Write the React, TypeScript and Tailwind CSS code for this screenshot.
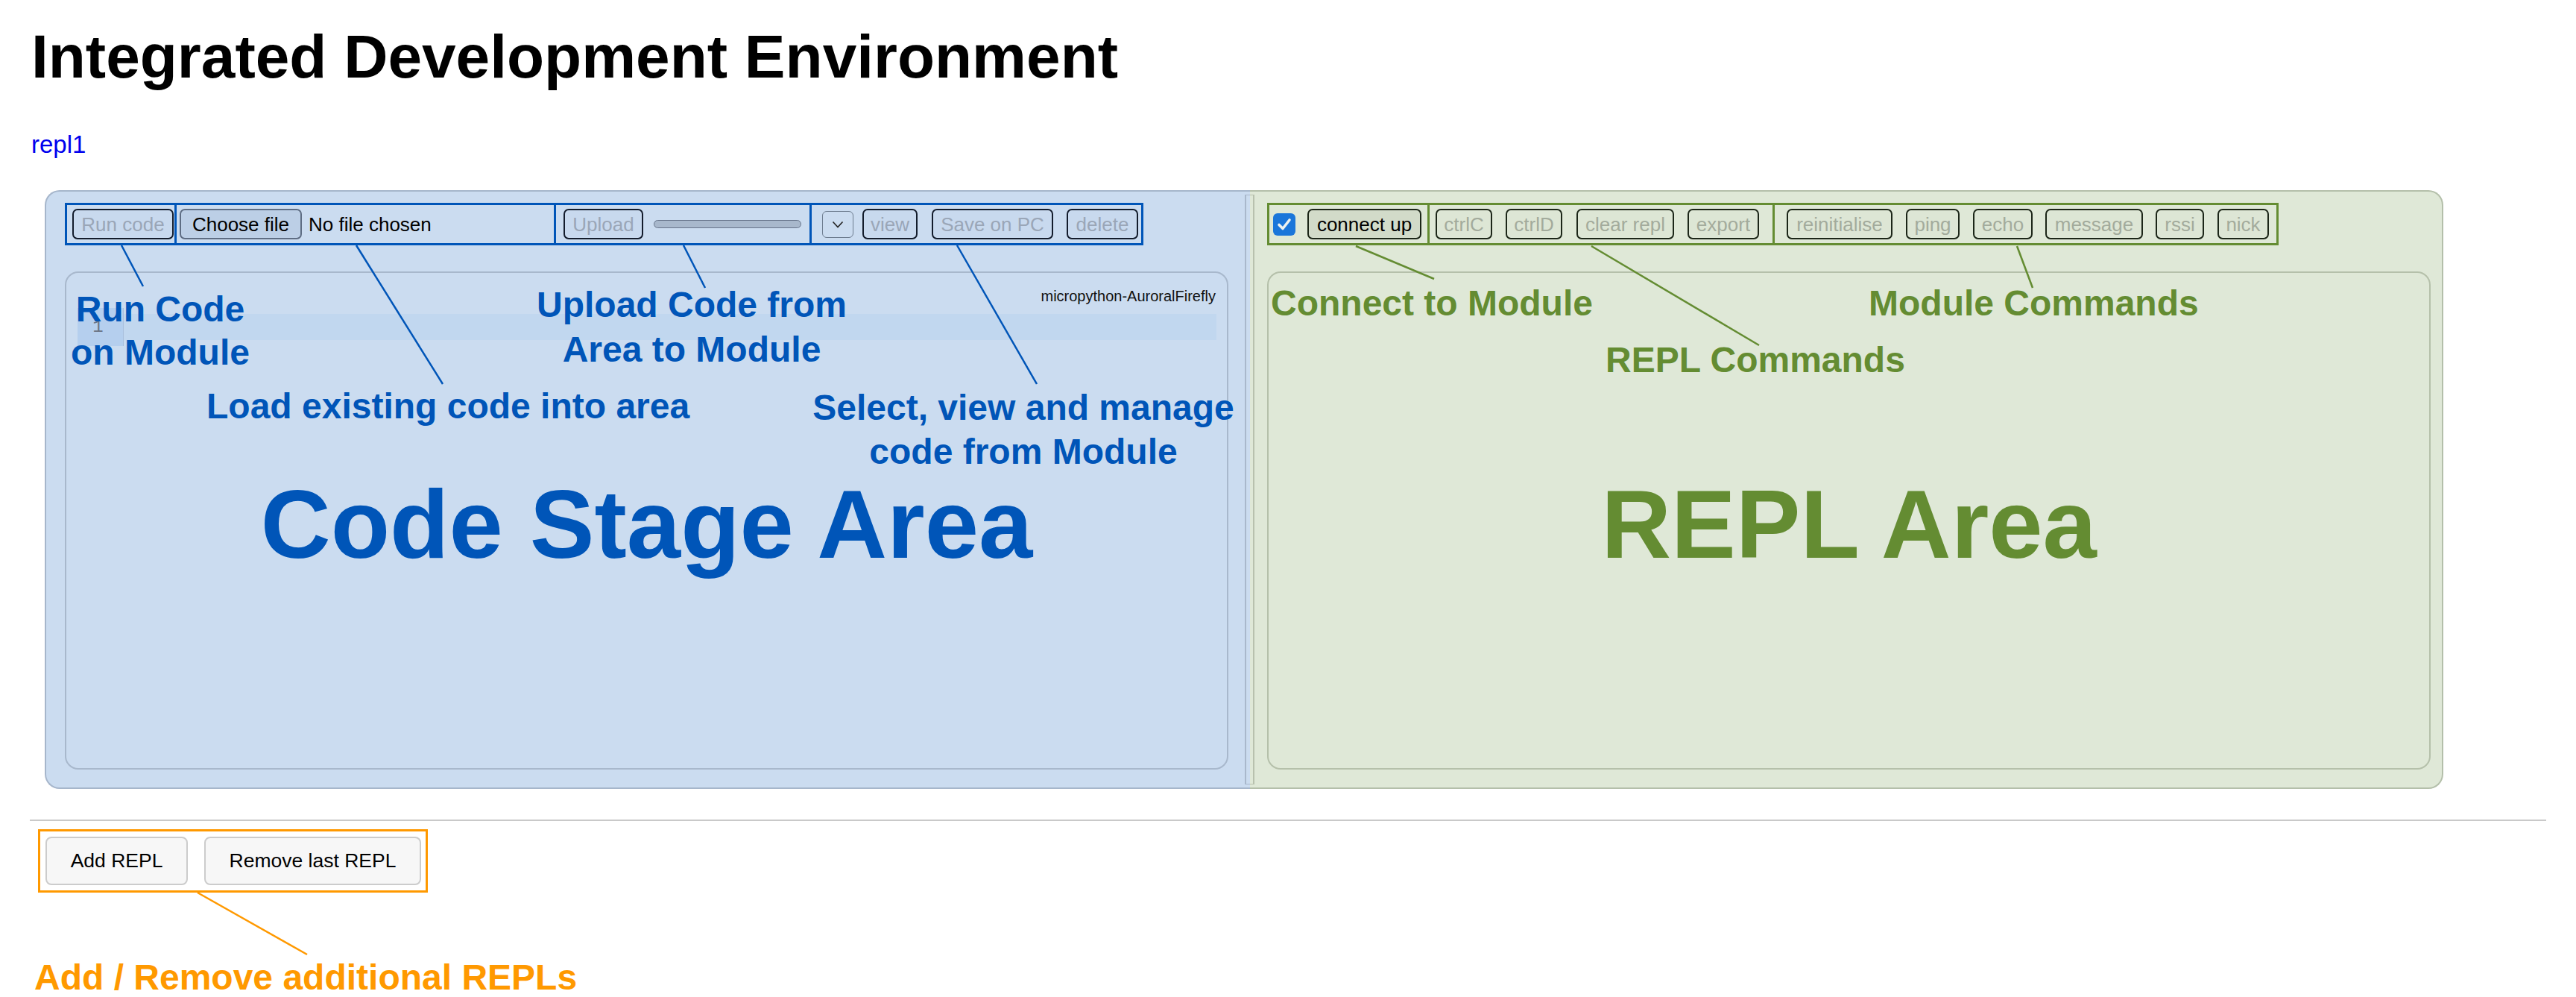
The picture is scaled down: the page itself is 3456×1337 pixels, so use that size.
import React from "react";

const btnBase =
  "h-[41px] shrink-0 flex items-center justify-center rounded-[7px] border-2 text-[26px] leading-none";
const leftDis = `${btnBase} border-[#131c2c] bg-[#c8d9ee] text-[#9aa6b7]`;
const rightDis = `${btnBase} border-[#1c2618] bg-[#dde6d5] text-[#a3ab9c]`;

const annBlue = "absolute whitespace-nowrap font-bold text-[48px] text-[#0055b8]";
const annGreen = "absolute whitespace-nowrap font-bold text-[48px] text-[#648c32]";

export default function App() {
  return (
    <div className="relative min-h-[1337px] w-full overflow-hidden bg-white px-[40px] font-['Liberation_Sans',Arial,sans-serif] text-black">
      <h1 className="pl-[2px] pt-[35px] text-[82px] font-bold leading-[82px]">
        Integrated Development Environment
      </h1>
      <div className="mt-[57px] h-[40px] pl-[2px] text-[33px] leading-[40px] text-[#0000ee]">repl1</div>

      {/* IDE panel */}
      <div className="ml-[20px] mt-[41px] flex h-[803px] w-[3218px]">
        {/* left pane */}
        <div className="flex w-[1617px] rounded-l-[20px] border-y-2 border-l-2 border-[#a6b6cb] bg-[#cbdcf0]">
          <div className="flex flex-1 flex-col pb-[24px] pl-[25px] pr-[22px] pt-[15px]">
            {/* toolbar */}
            <div className="flex h-[57px] w-[1447px] items-center border-[3px] border-[#0055b8]">
              <div className="flex h-full w-[144px] items-center pl-[7px]">
                <div className={`${leftDis} w-[136px]`}>Run code</div>
              </div>
              <div className="flex h-full w-[509px] items-center border-l-[3px] border-[#0055b8] pl-[4px]">
                <div className="flex h-[41px] w-[164px] items-center justify-center rounded-[7px] border-2 border-[#5e6d83] bg-[#bccfe6] text-[26px] leading-none text-black">
                  Choose file
                </div>
                <span className="ml-[9px] text-[26px] leading-none text-black">No file chosen</span>
              </div>
              <div className="flex h-full w-[343px] items-center border-l-[3px] border-[#0055b8] pl-[10px]">
                <div className={`${leftDis} w-[107px]`}>Upload</div>
                <div className="ml-[14px] h-[11px] w-[198px] rounded-full border-[1.5px] border-[#66748a] bg-[#a8b8cc]" />
              </div>
              <div className="flex h-full flex-1 items-center border-l-[3px] border-[#0055b8] pl-[14px]">
                <div className="flex h-[36px] w-[42px] items-center justify-center rounded-[6px] border-[1.5px] border-[#6d7c8f] bg-[#cbdcf0]">
                  <svg width="16" height="10" viewBox="0 0 16 10">
                    <path d="M1.5 1.5 L8 8.5 L14.5 1.5" fill="none" stroke="#222" strokeWidth="1.6" />
                  </svg>
                </div>
                <div className={`${leftDis} ml-[12px] w-[74px]`}>view</div>
                <div className={`${leftDis} ml-[19px] w-[163px]`}>Save on PC</div>
                <div className={`${leftDis} ml-[18px] w-[96px]`}>delete</div>
              </div>
            </div>

            {/* code stage */}
            <div className="mt-[35px] flex h-[668px] flex-col rounded-[18px] border-2 border-[#a8b8cc]">
              <div className="mt-[19px] flex justify-end pr-[15px] text-[20px] leading-[24px] text-[#111]">
                micropython-AuroralFirefly
              </div>
              <div className="ml-[15px] mr-[14px] mt-[4px] flex h-[51px] items-center">
                <div className="flex h-full w-[62px] items-center justify-center border-r border-[#a9c0dc] bg-[#b5cfee] pr-[6px] font-['Liberation_Mono',monospace] text-[24px] text-[#6b7585]">
                  1
                </div>
                <div className="h-[35px] flex-1 bg-[#c1d7ef]" />
              </div>
              <div className="mt-[174px] text-center text-[130px] font-bold leading-[130px] text-[#0055b8]">
                Code Stage Area
              </div>
            </div>
          </div>
          {/* splitter left half */}
          <div className="my-[4px] w-[7px] border-y border-l-2 border-[#a9b8cb]" />
        </div>

        {/* right pane */}
        <div className="flex w-[1601px] rounded-r-[20px] border-y-2 border-r-2 border-[#b4bfaa] bg-[#dfe8d7]">
          <div className="my-[4px] w-[6px] border-y border-r-2 border-[#b8c1ae]" />
          <div className="flex flex-1 flex-col pb-[24px] pl-[17px] pr-[15px] pt-[15px]">
            <div className="flex h-[57px] w-[1357px] items-center border-[3px] border-[#648c32]">
              <div className="flex h-full w-[212px] items-center pl-[5px]">
                <div className="flex h-[30px] w-[30px] items-center justify-center rounded-[6px] bg-[#1a76da]">
                  <svg width="22" height="22" viewBox="0 0 22 22">
                    <path d="M4 11.5 L9 16.5 L18 5" fill="none" stroke="#eef2f0" strokeWidth="3.6" strokeLinecap="round" strokeLinejoin="round" />
                  </svg>
                </div>
                <div className={`${btnBase} ml-[16px] w-[153px] border-[#1c2618] bg-[#d2dbc9] text-black`}>connect up</div>
              </div>
              <div className="flex h-full w-[463px] items-center border-l-[3px] border-[#648c32] pl-[8px]">
                <div className={`${rightDis} w-[76px]`}>ctrlC</div>
                <div className={`${rightDis} ml-[18px] w-[76px]`}>ctrlD</div>
                <div className={`${rightDis} ml-[19px] w-[131px]`}>clear repl</div>
                <div className={`${rightDis} ml-[18px] w-[96px]`}>export</div>
              </div>
              <div className="flex h-full flex-1 items-center border-l-[3px] border-[#648c32] pl-[16px]">
                <div className={`${rightDis} w-[142px]`}>reinitialise</div>
                <div className={`${rightDis} ml-[18px] w-[72px]`}>ping</div>
                <div className={`${rightDis} ml-[18px] w-[80px]`}>echo</div>
                <div className={`${rightDis} ml-[17px] w-[131px]`}>message</div>
                <div className={`${rightDis} ml-[17px] w-[65px]`}>rssi</div>
                <div className={`${rightDis} ml-[18px] w-[69px]`}>nick</div>
              </div>
            </div>
            <div className="mt-[35px] flex h-[668px] flex-col rounded-[18px] border-2 border-[#b5c0aa]">
              <div className="mt-[272px] text-center text-[130px] font-bold leading-[130px] text-[#648c32]">
                REPL Area
              </div>
            </div>
          </div>
        </div>
      </div>

      <div className="mt-[41px] h-[2px] w-full bg-[#c9c9c9]" />

      <div className="ml-[11px] mt-[11px] flex h-[85px] w-[523px] items-start border-[3px] border-[#ff9900] pl-[7px] pt-[7px]">
        <div className="flex h-[65px] w-[191px] items-center justify-center rounded-[8px] border-2 border-[#cccccc] bg-[#f7f7f7] text-[26.5px] leading-none">
          Add REPL
        </div>
        <div className="ml-[22px] flex h-[65px] w-[291px] items-center justify-center rounded-[8px] border-2 border-[#cccccc] bg-[#f7f7f7] text-[26.5px] leading-none">
          Remove last REPL
        </div>
      </div>

      <div className="ml-[6px] mt-[86px] whitespace-nowrap text-[48px] font-bold leading-[56px] text-[#ff9900]">
        Add / Remove additional REPLs
      </div>

      {/* annotation leader lines */}
      <svg className="pointer-events-none absolute left-0 top-0" width="3456" height="1337" viewBox="0 0 3456 1337">
        <g stroke="#0055b8" strokeWidth="2.5" fill="none">
          <line x1="163" y1="329" x2="192" y2="384" />
          <line x1="478" y1="329" x2="594" y2="515" />
          <line x1="917" y1="329" x2="946" y2="386" />
          <line x1="1284" y1="329" x2="1391" y2="515" />
        </g>
        <g stroke="#648c32" strokeWidth="2.5" fill="none">
          <line x1="1819" y1="330" x2="1924" y2="374" />
          <line x1="2135" y1="330" x2="2360" y2="463" />
          <line x1="2706" y1="330" x2="2727" y2="386" />
        </g>
        <line x1="265" y1="1197" x2="412" y2="1280" stroke="#ff9900" strokeWidth="2.5" />
      </svg>

      {/* annotation labels */}
      <div className={`${annBlue} left-[15px] top-[386px] w-[400px] text-center leading-[58px]`}>
        Run Code
        <br />
        on Module
      </div>
      <div className={`${annBlue} left-[277px] top-[516px] leading-[58px]`}>Load existing code into area</div>
      <div className={`${annBlue} left-[628px] top-[379px] w-[600px] text-center leading-[60px]`}>
        Upload Code from
        <br />
        Area to Module
      </div>
      <div className={`${annBlue} left-[1073px] top-[517px] w-[600px] text-center leading-[59px]`}>
        Select, view and manage
        <br />
        code from Module
      </div>
      <div className={`${annGreen} left-[1705px] top-[378px] leading-[58px]`}>Connect to Module</div>
      <div className={`${annGreen} left-[2154px] top-[454px] leading-[58px]`}>REPL Commands</div>
      <div className={`${annGreen} left-[2507px] top-[378px] leading-[58px]`}>Module Commands</div>
    </div>
  );
}
